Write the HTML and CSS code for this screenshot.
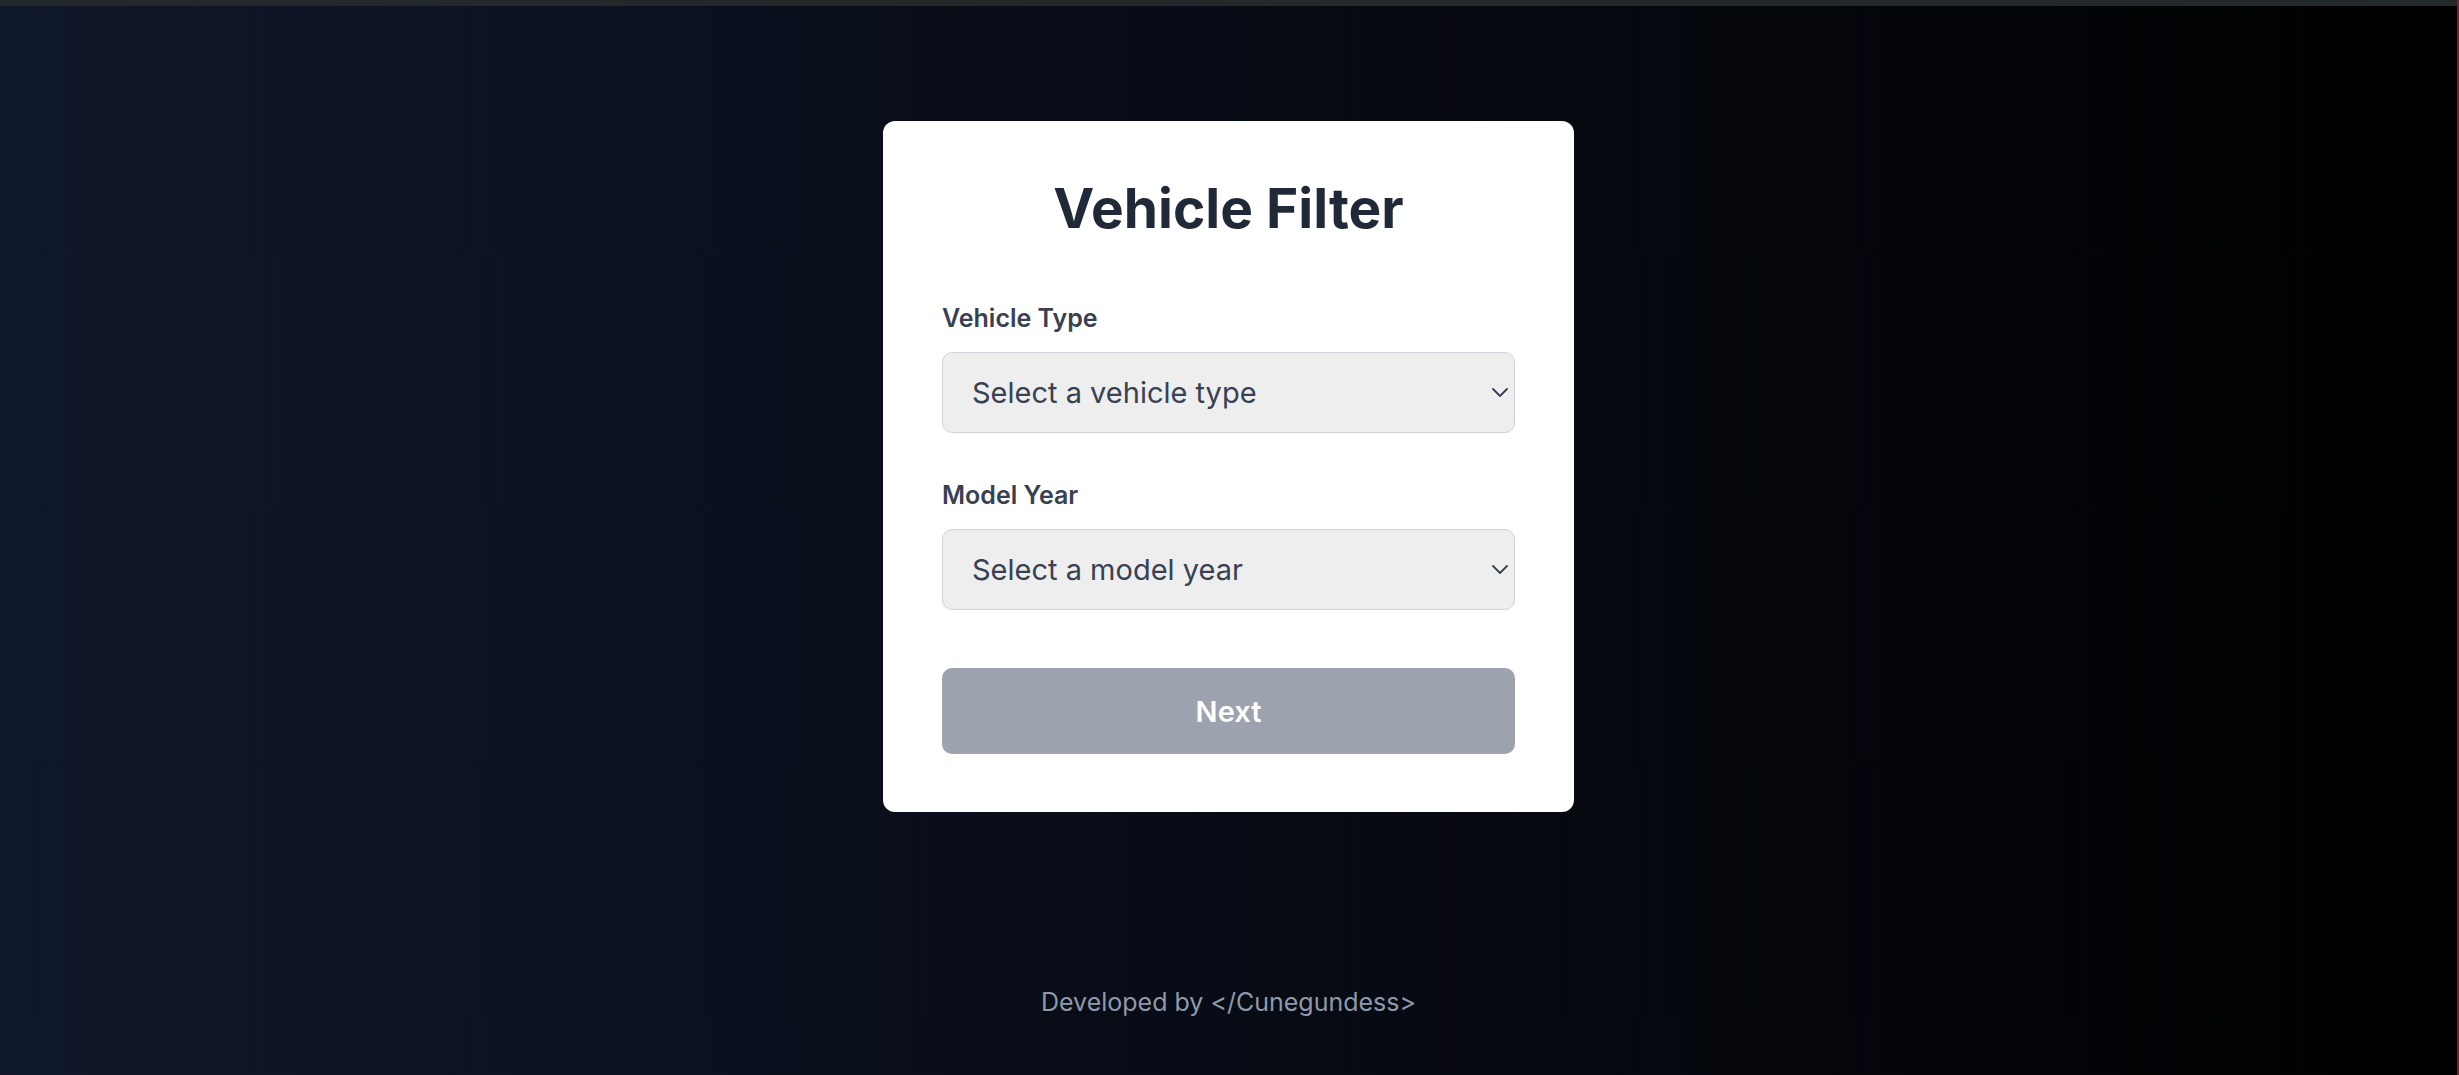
FILE: index.html
```html
<!DOCTYPE html>
<html lang="en">
<head>
<meta charset="utf-8">
<title>Vehicle Filter</title>
<link rel="stylesheet" href="styles.css">
</head>
<body>
<div class="topbar"></div>
<div class="page">
  <main class="main">
    <form class="card">
      <h1 class="title">Vehicle Filter</h1>
      <div class="field">
        <label class="label" for="type">Vehicle Type</label>
        <div class="select-wrap">
          <select id="type" class="select">
            <option>Select a vehicle type</option>
          </select>
          <svg class="chevron" viewBox="0 0 16 9" width="16" height="9"><path d="M1 1l7 7 7-7" fill="none" stroke="#374151" stroke-width="1.8" stroke-linecap="round" stroke-linejoin="round"/></svg>
        </div>
      </div>
      <div class="field">
        <label class="label" for="year">Model Year</label>
        <div class="select-wrap">
          <select id="year" class="select">
            <option>Select a model year</option>
          </select>
          <svg class="chevron" viewBox="0 0 16 9" width="16" height="9"><path d="M1 1l7 7 7-7" fill="none" stroke="#374151" stroke-width="1.8" stroke-linecap="round" stroke-linejoin="round"/></svg>
        </div>
      </div>
      <button type="button" class="next">Next</button>
    </form>
  </main>
  <footer class="footer">Developed by &lt;/Cunegundess&gt;</footer>
</div>
<div class="edge"></div>
</body>
</html>
```
FILE: styles.css
```css
* { box-sizing: border-box; }
html, body { margin: 0; padding: 0; height: 100%; }
body {
  font-family: Inter, "Noto Sans", sans-serif;
  background: linear-gradient(to right, #0f172a, #000000);
  overflow: hidden;
}
.topbar { height: 6px; background: #23282b; }
.page {
  height: calc(100% - 6px);
  margin-right: 2px;
  display: flex;
  flex-direction: column;
  align-items: center;
}
.main { padding-top: 115px; }
.card {
  width: 691px;
  background: #ffffff;
  border-radius: 12px;
  padding: 54px 59px 58px;
  display: flex;
  flex-direction: column;
}
.title {
  margin: 0 0 61px;
  font-size: 55px;
  line-height: 66px;
  font-weight: 700;
  color: #1f2937;
  text-align: center;
  letter-spacing: 0;
}
.field { display: flex; flex-direction: column; margin-bottom: 46px; }
.field + .field { margin-bottom: 58px; }
.label {
  font-size: 25px;
  line-height: 32px;
  font-weight: 600;
  color: #374151;
  margin-bottom: 18px;
}
.select-wrap { position: relative; }
.select {
  appearance: none;
  -webkit-appearance: none;
  width: 100%;
  height: 81px;
  border: 1px solid #d1d5db;
  border-radius: 10px;
  background: #eeeeee;
  padding: 0 40px 0 29px;
  font-family: inherit;
  font-size: 29px;
  color: #374151;
  outline: none;
}
.chevron {
  position: absolute;
  right: 7px;
  top: 36px;
  pointer-events: none;
}
.next {
  height: 86px;
  border: none;
  border-radius: 10px;
  background: #9ca3af;
  color: #ffffff;
  font-family: inherit;
  font-size: 29px;
  font-weight: 600;
}
.footer {
  margin-top: 174px;
  font-size: 25px;
  line-height: 32px;
  color: #8f99aa;
}
.edge {
  position: fixed;
  top: 0;
  right: 0;
  width: 2px;
  height: 100%;
  background: #7a1f2e;
}
```
